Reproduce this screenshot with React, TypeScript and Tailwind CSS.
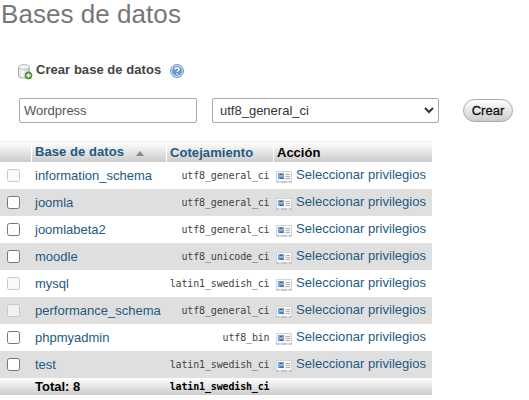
type Database = { name: string; collation: string; system?: boolean };

const databases: Database[] = [
  { name: "information_schema", collation: "utf8_general_ci", system: true },
  { name: "joomla", collation: "utf8_general_ci" },
  { name: "joomlabeta2", collation: "utf8_general_ci" },
  { name: "moodle", collation: "utf8_unicode_ci" },
  { name: "mysql", collation: "latin1_swedish_ci", system: true },
  { name: "performance_schema", collation: "utf8_general_ci", system: true },
  { name: "phpmyadmin", collation: "utf8_bin" },
  { name: "test", collation: "latin1_swedish_ci" },
];

const columns = "grid grid-cols-[32px_135px_107px_158px]";
const mono = "font-['DejaVu_Sans_Mono',monospace] text-[10px] tracking-[-0.15px]";

function DatabaseAddIcon() {
  return (
    <svg width="16" height="16" viewBox="0 0 16 16" className="shrink-0">
      <defs>
        <linearGradient id="cylinder" x1="0" x2="1">
          <stop offset="0" stopColor="#dcdcdc" />
          <stop offset=".35" stopColor="#fafafa" />
          <stop offset="1" stopColor="#c4c4c4" />
        </linearGradient>
      </defs>
      <path d="M.5 3v9c0 1.3 2.4 2 5.5 2s5.5-.7 5.5-2V3" fill="url(#cylinder)" stroke="#b0b0b0" />
      <ellipse cx="6" cy="3" rx="5.5" ry="2.4" fill="#f4f4f4" stroke="#bcbcbc" />
      <circle cx="10.5" cy="11.5" r="3.5" fill="#5da344" stroke="#3f8429" strokeWidth=".8" />
      <path d="M10.5 9.5v4M8.5 11.5h4" stroke="#fff" strokeWidth="1.3" />
    </svg>
  );
}

function HelpIcon() {
  return (
    <svg width="14" height="14" viewBox="0 0 15 15" className="shrink-0">
      <circle cx="7.5" cy="7.5" r="6.9" fill="#dbe8f7" stroke="#5588c4" strokeWidth="1" />
      <circle cx="7.5" cy="7.5" r="5.3" fill="#6795cf" />
      <path d="M5.4 6c0-1.4 1-2 2.2-2s2.1.7 2.1 1.8c0 1.5-2 1.4-2 2.9M7.7 9.8v1.6" fill="none" stroke="#fff" strokeWidth="1.5" />
    </svg>
  );
}

function PrivilegesIcon() {
  return (
    <svg width="16" height="12" viewBox="0 0 16 12" className="shrink-0">
      <path d="M.5.5h15v10.5H.5z" fill="#f8f8f8" stroke="#d4d4d4" />
      <path d="M.5 11h2.5M5 11h6M13 11h2.5" stroke="#aaa" />
      <path d="M2 2h6v6H2z" fill="#69aaf0" />
      <path d="M3.4 8c0-2.4 4.2-2.4 4.6 0z" fill="#2f74c0" />
      <circle cx="5.2" cy="4.6" r="1.5" fill="#dda77b" />
      <path d="M3.9 3.9c0-1.6 2.6-1.6 2.6 0" fill="#705037" />
      <path d="M9.5 3.5H14M9.5 5.5H14M9.5 7.5H14" stroke="#b0b0b0" />
    </svg>
  );
}

function Checkbox({ disabled, label }: { disabled?: boolean; label: string }) {
  return (
    <input
      type="checkbox"
      disabled={disabled}
      aria-label={label}
      className="ml-[7px] block size-[13px] appearance-none rounded-[2.5px] border border-[#767676] bg-white disabled:border-[#c8c8c8] disabled:bg-[#f8f8f8]/70"
    />
  );
}

export default function App() {
  return (
    <main className="h-[400px] w-[529px] overflow-hidden bg-white font-['Liberation_Sans',Arial,sans-serif] text-[13px] text-[#444]">
      <h1 className="h-[61px] pl-px text-[26px] leading-[28px] tracking-[0.05px] whitespace-nowrap text-[#777]">Bases de datos</h1>

      <form>
        <div className="flex h-[18px] items-center pl-[18px]">
          <div className="pt-[3px]">
            <DatabaseAddIcon />
          </div>
          <strong className="ml-[2px] w-[134px] leading-[16px] tracking-[0.05px] whitespace-nowrap">Crear base de datos</strong>
          <div className="pt-[2px]">
            <HelpIcon />
          </div>
        </div>
        <div className="mt-[19px] flex h-[25px] items-center pl-[19px]">
          <input
            defaultValue="Wordpress"
            className="h-[25px] w-[178px] rounded-[2px] border border-[#aaa] px-1 text-[#555]"
          />
          <div className="ml-[15px] flex h-[25px] w-[227px] items-center justify-between rounded-[2px] border border-[#aaa] pr-1 pl-[7px] text-[#333]">
            <span>utf8_general_ci</span>
            <svg width="10" height="7" viewBox="0 0 10 7">
              <path d="M1 1l4 4 4-4" fill="none" stroke="#333" strokeWidth="2" />
            </svg>
          </div>
          <button
            type="button"
            className="ml-6 h-[23px] w-[50px] rounded-[12px] border border-[#aaa] bg-linear-to-b from-white to-[#ccc] text-[#111] [-webkit-text-stroke:0.3px_#111]"
          >
            Crear
          </button>
        </div>
      </form>

      <section className="mt-[19px] w-[432px] text-[#235a81]">
        <div className={`${columns} h-5 bg-linear-to-b from-white to-[#ccc] font-bold whitespace-nowrap shadow-[0_-1px_0_#eee]`}>
          <div className="border-r border-white" />
          <div className="flex items-center border-r border-white pl-[3px]">
            <span className="pb-[2px] tracking-[0.06px]">Base de datos</span>
            <svg width="8" height="5" viewBox="0 0 8 5" className="mt-[2px] ml-3">
              <path d="M4 0l4 5H0z" fill="#888" />
            </svg>
          </div>
          <div className="border-r border-white pl-[3px] leading-[21px] tracking-[0.07px]">Cotejamiento</div>
          <div className="pl-[3px] leading-[21px] text-black">Acción</div>
        </div>

        {databases.map((db) => (
          <div key={db.name} className={`${columns} h-[27px] items-center whitespace-nowrap even:bg-white odd:bg-[#dfdfdf]`}>
            <Checkbox disabled={db.system} label={db.name} />
            <span className="pl-[3px]">{db.name}</span>
            <span className={`${mono} pr-[4.5px] text-right text-[#444]`}>{db.collation}</span>
            <span className="flex items-center pl-[2px]">
              <span className="pt-[2px]">
                <PrivilegesIcon />
              </span>
              <span className="ml-1 pb-[2px] tracking-[0.03px]">Seleccionar privilegios</span>
            </span>
          </div>
        ))}

        <div className={`${columns} h-[17px] items-center bg-linear-to-b from-white to-[#ccc] font-bold whitespace-nowrap text-black`}>
          <span />
          <span className="pl-[3px] leading-[17px]">Total: 8</span>
          <span className={`${mono} pr-[4.5px] text-right`}>latin1_swedish_ci</span>
          <span />
        </div>
      </section>
    </main>
  );
}
